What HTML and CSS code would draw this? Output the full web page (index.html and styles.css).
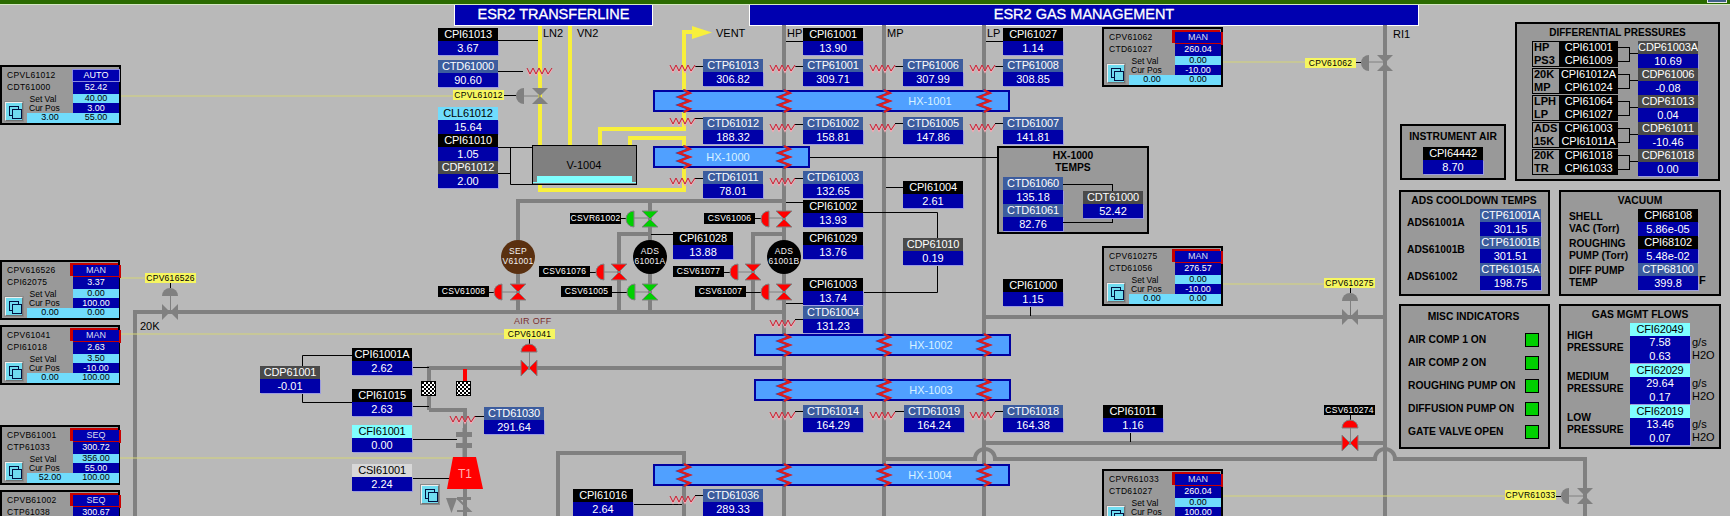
FILE: index.html
```html
<!DOCTYPE html>
<html lang="en">
<head>
<meta charset="utf-8">
<title>ESR2 Cryogenics</title>
<link rel="stylesheet" href="styles.css">
</head>
<body>
<div class="page">
  <div class="topbar"><span class="corner"></span></div>
  <header class="titles">
    <h1 class="title title-tl">ESR2 TRANSFERLINE</h1>
    <h1 class="title title-gm">ESR2 GAS MANAGEMENT</h1>
  </header>

  <svg class="plant" width="1730" height="516" viewBox="0 0 1730 516">
    <defs>
      <polygon id="hg" points="-8,-8 8,-8 -8,8 8,8"/>
      <polygon id="bt" points="-8,-8 8,8 8,-8 -8,8"/>
      <path id="dl" d="M0,-8A8,8 0 0 0 0,8Z"/>
      <path id="dt" d="M-8,0A8,8 0 0 1 8,0Z"/>
      <g id="sq" fill="none">
        <polyline class="sq-s" points="0,-2 3,4 6,-2 9,4 12,-2 15,4 18,-2 21,4 25,-2"/>
        <polyline class="sq-l" points="0,-3 3,3 6,-3 9,3 12,-3 15,3 18,-3 21,3 25,-3"/>
      </g>
      <g id="coil" fill="none">
        <polyline class="coil-b" points="-1,0 5,3 -6,7 5,11 -6,15 5,19 -1,22"/>
        <polyline class="coil-r" points="0,0 6,3 -5,7 6,11 -5,15 6,19 0,22"/>
      </g>
      <pattern id="chk" width="4" height="4" patternUnits="userSpaceOnUse">
        <rect width="4" height="4" fill="#fff"/>
        <rect width="2" height="2" fill="#000"/>
        <rect x="2" y="2" width="2" height="2" fill="#000"/>
      </pattern>
    </defs>

    <path class="pipe" d="M784 25V516M884 25V516M984 25V516M1385 25V516"/>
    <path class="pipe" d="M518 312V201H784M650 201V312M619 312V234H650M753 312V234H784"/>
    <path class="pipe" d="M135 516V312H784M429 410V368H784M429 410H465V457M465 489V516"/>
    <path class="pipe" d="M986 317H1385M986 443H1385M884 459H975A10 10 0 0 1 995 459H1375A10 10 0 0 1 1395 459H1585V516M558 516V453H684V516"/>
    <path class="pipe-hot" d="M465 369V381"/>

    <path class="ln" d="M540 26V145M570 26V145M600 145V129H684V32H694M630 145V138H684V190H540V185"/>
    <polygon class="fill-y" points="692,26 712,32.5 692,39"/>

    <path class="ctl-line" d="M121 96H453M120 278H145M120 334H504M120 458H453M1223 62H1305M1223 284H1324M1223 496H1505"/>

    <path class="wire" d="M498 40.5H538M498 71.5H523M498 147.5H532M498 173.5H510.5M510.5 147V184.5H532"/>
    <path class="wire" d="M786 41.5H803M986 41.5H1003M786 202.5H803M786 303.5H803M886 187.5H903M651 234.5H673"/>
    <path class="wire" d="M695 66.5H703M795 66.5H803M895 66.5H903M995 66.5H1003M695 118.5H703M795 124.5H803M895 123.5H903M995 123.5H1003M695 178.5H703M795 178.5H803M795 319.5H803M795 411.5H803M475 416.5H484M695 495.5H703M895 411.5H904M995 411.5H1003"/>
    <path class="wire" d="M810 157.5H997M863 212.5H937.5V238M937.5 265V292.5H863M633 504.5H682"/>
    <path class="wire" d="M302.5 366V355.5H352M302.5 393V402.5H352M412 367.5H429M412 406.5H429M412 439.5H457M412 478.5H449M1030.5 306V316M1130.5 432V442"/>
    <path class="wire" d="M503 95.5H516M621 218.5H626M755 218.5H761M590 272.5H596M724 272.5H730M489 292.5H494M612 292.5H627M746 292.5H761M1356 62.5H1361M1556 496.5H1561M170.5 283V288M529.5 339V344M1350.5 288V293M1350.5 415V420"/>

    <rect class="vessel" x="532.5" y="145.5" width="104" height="39"/>
    <rect class="liquid" x="537" y="176" width="95" height="6"/>
    <rect class="liquid" x="533" y="182" width="103" height="1"/>
    <text class="lbl" x="584" y="169" text-anchor="middle">V-1004</text>

    <g class="hx">
      <rect x="654" y="91" width="355" height="20"/>
      <rect x="654" y="147" width="155" height="20"/>
      <rect x="755" y="335" width="255" height="20"/>
      <rect x="755" y="380" width="255" height="20"/>
      <rect x="654" y="465" width="355" height="20"/>
      <text x="930" y="105" text-anchor="middle">HX-1001</text>
      <text x="728" y="161" text-anchor="middle">HX-1000</text>
      <text x="931" y="349" text-anchor="middle">HX-1002</text>
      <text x="931" y="394" text-anchor="middle">HX-1003</text>
      <text x="930" y="479" text-anchor="middle">HX-1004</text>
    </g>

    <use href="#coil" x="684" y="90"/><use href="#coil" x="784" y="90"/><use href="#coil" x="884" y="90"/><use href="#coil" x="984" y="90"/>
    <use href="#coil" x="684" y="146"/><use href="#coil" x="784" y="146"/>
    <use href="#coil" x="784" y="334"/><use href="#coil" x="884" y="334"/><use href="#coil" x="984" y="334"/>
    <use href="#coil" x="784" y="379"/><use href="#coil" x="884" y="379"/><use href="#coil" x="984" y="379"/>
    <use href="#coil" x="684" y="464"/><use href="#coil" x="784" y="464"/><use href="#coil" x="884" y="464"/><use href="#coil" x="984" y="464"/>

    <use href="#sq" x="527" y="71"/>
    <use href="#sq" x="670" y="68"/><use href="#sq" x="770" y="68"/><use href="#sq" x="870" y="68"/><use href="#sq" x="970" y="68"/>
    <use href="#sq" x="670" y="121"/><use href="#sq" x="770" y="127"/><use href="#sq" x="870" y="127"/><use href="#sq" x="970" y="127"/>
    <use href="#sq" x="670" y="181"/><use href="#sq" x="770" y="181"/>
    <use href="#sq" x="770" y="323"/><use href="#sq" x="770" y="415"/><use href="#sq" x="870" y="415"/><use href="#sq" x="970" y="415"/>
    <use href="#sq" x="450" y="419"/><use href="#sq" x="670" y="499"/>

    <path class="stem" d="M524 96H540M634 218H650M769 218H784M604 272H619M738 272H753M502 292H518M635 292H650M769 292H784M1369 62H1385M1569 496H1585M170.5 296V312M529.5 352V368M1350.5 301V317M1350.5 428V443"/>

    <g class="v-grey">
      <use href="#hg" x="540" y="96"/><use href="#dl" x="524" y="96"/>
      <use href="#hg" x="1385" y="63"/><use href="#dl" x="1369" y="63"/>
      <use href="#hg" x="1585" y="496"/><use href="#dl" x="1569" y="496"/>
      <use href="#bt" x="170" y="312"/><use href="#dt" x="170" y="296"/>
      <use href="#bt" x="1350" y="317"/><use href="#dt" x="1350" y="301"/>
    </g>
    <g class="v-green">
      <use href="#hg" x="650" y="219"/><use href="#dl" x="634" y="219"/>
      <use href="#hg" x="650" y="292"/><use href="#dl" x="635" y="292"/>
    </g>
    <g class="v-red">
      <use href="#hg" x="784" y="219"/><use href="#dl" x="769" y="219"/>
      <use href="#hg" x="619" y="272"/><use href="#dl" x="604" y="272"/>
      <use href="#hg" x="753" y="272"/><use href="#dl" x="738" y="272"/>
      <use href="#hg" x="518" y="292"/><use href="#dl" x="502" y="292"/>
      <use href="#hg" x="784" y="292"/><use href="#dl" x="769" y="292"/>
      <use href="#bt" x="529" y="368"/><use href="#dt" x="529" y="352"/>
      <use href="#bt" x="1350" y="443"/><use href="#dt" x="1350" y="428"/>
    </g>

    <circle class="sep" cx="518" cy="257" r="17"/>
    <circle class="ads" cx="650" cy="257" r="17"/>
    <circle class="ads" cx="784" cy="257" r="17"/>
    <text class="vessel-t" x="518" y="254" text-anchor="middle">SEP</text>
    <text class="vessel-t" x="518" y="264" text-anchor="middle">V61001</text>
    <text class="vessel-t" x="650" y="254" text-anchor="middle">ADS</text>
    <text class="vessel-t" x="650" y="264" text-anchor="middle">61001A</text>
    <text class="vessel-t" x="784" y="254" text-anchor="middle">ADS</text>
    <text class="vessel-t" x="784" y="264" text-anchor="middle">61001B</text>

    <rect class="chk" x="421.5" y="381.5" width="14" height="14"/>
    <rect class="chk" x="456.5" y="381.5" width="14" height="14"/>

    <rect class="fill-g" x="456" y="432" width="16" height="5"/>
    <rect class="fill-g" x="456" y="443" width="16" height="5"/>
    <path class="pipe-thin" d="M464.5 428V457"/>
    <polygon class="fill-r" points="453,457 476,457 483,489 447,489"/>
    <text class="t1" x="465" y="478" text-anchor="middle">T1</text>
    <rect class="fill-g" x="457" y="497" width="14" height="3"/>
    <polygon class="fill-g" points="446,498 457,498 451.5,513"/>
    <path class="pipe-diag" d="M458 499L470 511H457"/>

    <text class="lbl" x="543" y="37">LN2</text>
    <text class="lbl" x="577" y="37">VN2</text>
    <text class="lbl" x="716" y="37">VENT</text>
    <text class="lbl" x="787" y="37">HP</text>
    <text class="lbl" x="887" y="37">MP</text>
    <text class="lbl" x="987" y="37">LP</text>
    <text class="lbl" x="1393" y="38">RI1</text>
    <text class="lbl" x="140" y="330">20K</text>
    <text class="airoff" x="514" y="324">AIR OFF</text>
  </svg>

  <div class="tag node at-cpi61013"><b class="k">CPI61013</b><span>3.67</span></div>
  <div class="tag node at-ctd61000"><b class="s">CTD61000</b><span>90.60</span></div>
  <div class="tag node at-cll61012"><b class="c">CLL61012</b><span>15.64</span></div>
  <div class="tag node at-cpi61010"><b class="k">CPI61010</b><span>1.05</span></div>
  <div class="tag node at-cdp61012"><b class="d">CDP61012</b><span>2.00</span></div>
  <div class="tag node at-cpi61001"><b class="k">CPI61001</b><span>13.90</span></div>
  <div class="tag node at-ctp61013"><b class="s">CTP61013</b><span>306.82</span></div>
  <div class="tag node at-ctp61001"><b class="s">CTP61001</b><span>309.71</span></div>
  <div class="tag node at-ctd61012"><b class="s">CTD61012</b><span>188.32</span></div>
  <div class="tag node at-ctd61002"><b class="s">CTD61002</b><span>158.81</span></div>
  <div class="tag node at-ctd61011"><b class="s">CTD61011</b><span>78.01</span></div>
  <div class="tag node at-ctd61003"><b class="s">CTD61003</b><span>132.65</span></div>
  <div class="tag node at-cpi61002"><b class="k">CPI61002</b><span>13.93</span></div>
  <div class="tag node at-cpi61028"><b class="k">CPI61028</b><span>13.88</span></div>
  <div class="tag node at-cpi61029"><b class="k">CPI61029</b><span>13.76</span></div>
  <div class="tag node at-cpi61003"><b class="k">CPI61003</b><span>13.74</span></div>
  <div class="tag node at-ctd61004"><b class="s">CTD61004</b><span>131.23</span></div>
  <div class="tag node at-ctd61014"><b class="s">CTD61014</b><span>164.29</span></div>
  <div class="tag node at-ctd61036"><b class="s">CTD61036</b><span>289.33</span></div>
  <div class="tag node at-cpi61016"><b class="k">CPI61016</b><span>2.64</span></div>
  <div class="tag node at-ctd61030"><b class="s">CTD61030</b><span>291.64</span></div>
  <div class="tag node at-cdp61001"><b class="d">CDP61001</b><span>-0.01</span></div>
  <div class="tag node at-cpi61001a"><b class="k">CPI61001A</b><span>2.62</span></div>
  <div class="tag node at-cpi61015"><b class="k">CPI61015</b><span>2.63</span></div>
  <div class="tag node at-cfi61001"><b class="a">CFI61001</b><span>0.00</span></div>
  <div class="tag node at-csi61001"><b class="g">CSI61001</b><span>2.24</span></div>
  <div class="tag node at-cpi61027"><b class="k">CPI61027</b><span>1.14</span></div>
  <div class="tag node at-ctp61006"><b class="s">CTP61006</b><span>307.99</span></div>
  <div class="tag node at-ctp61008"><b class="s">CTP61008</b><span>308.85</span></div>
  <div class="tag node at-ctd61005"><b class="s">CTD61005</b><span>147.86</span></div>
  <div class="tag node at-ctd61007"><b class="s">CTD61007</b><span>141.81</span></div>
  <div class="tag node at-cpi61004"><b class="k">CPI61004</b><span>2.61</span></div>
  <div class="tag node at-cdp61010"><b class="d">CDP61010</b><span>0.19</span></div>
  <div class="tag node at-cpi61000"><b class="k">CPI61000</b><span>1.15</span></div>
  <div class="tag node at-cpi61011"><b class="k">CPI61011</b><span>1.16</span></div>
  <div class="tag node at-ctd61019"><b class="s">CTD61019</b><span>164.24</span></div>
  <div class="tag node at-ctd61018"><b class="s">CTD61018</b><span>164.38</span></div>

  <div class="pill yel at-y-cpvl61012">CPVL61012</div>
  <div class="pill yel at-y-cpv616526">CPV616526</div>
  <div class="pill yel at-y-cpv61041">CPV61041</div>
  <div class="pill yel at-y-cpv61062">CPV61062</div>
  <div class="pill yel at-y-cpv610275">CPV610275</div>
  <div class="pill yel at-y-cpvr61033">CPVR61033</div>
  <div class="pill blk at-k-csvr61002">CSVR61002</div>
  <div class="pill blk at-k-csv61006">CSV61006</div>
  <div class="pill blk at-k-csv61076">CSV61076</div>
  <div class="pill blk at-k-csv61077">CSV61077</div>
  <div class="pill blk at-k-csv61008">CSV61008</div>
  <div class="pill blk at-k-csv61005">CSV61005</div>
  <div class="pill blk at-k-csv61007">CSV61007</div>
  <div class="pill blk at-k-csv610274">CSV610274</div>

  <button class="btn at-btn-t1" type="button" aria-label="Open"></button>

  <section class="ctl at-cpvl61012">
    <div class="c-name">CPVL61012</div><div class="c-mode">AUTO</div>
    <div class="c-name">CDT61000</div><div class="c-val">52.42</div>
    <button class="btn c-btn" type="button" aria-label="Open"></button>
    <div class="c-lab c-lab-set">Set Val</div><div class="c-cy">40.00</div>
    <div class="c-lab">Cur Pos</div><div class="c-val">3.00</div>
    <div class="c-cy c-lo">3.00</div><div class="c-cy">55.00</div>
  </section>
  <section class="ctl at-cpv616526">
    <div class="c-name">CPV616526</div><div class="c-mode alarm">MAN</div>
    <div class="c-name">CPI62075</div><div class="c-val">3.37</div>
    <button class="btn c-btn" type="button" aria-label="Open"></button>
    <div class="c-lab c-lab-set">Set Val</div><div class="c-cy">0.00</div>
    <div class="c-lab">Cur Pos</div><div class="c-val">100.00</div>
    <div class="c-cy c-lo">0.00</div><div class="c-cy">0.00</div>
  </section>
  <section class="ctl at-cpv61041">
    <div class="c-name">CPV61041</div><div class="c-mode alarm">MAN</div>
    <div class="c-name">CPI61018</div><div class="c-val">2.63</div>
    <button class="btn c-btn" type="button" aria-label="Open"></button>
    <div class="c-lab c-lab-set">Set Val</div><div class="c-cy">3.50</div>
    <div class="c-lab">Cur Pos</div><div class="c-val">-10.00</div>
    <div class="c-cy c-lo">0.00</div><div class="c-cy">100.00</div>
  </section>
  <section class="ctl at-cpvb61001">
    <div class="c-name">CPVB61001</div><div class="c-mode alarm">SEQ</div>
    <div class="c-name">CTP61033</div><div class="c-val">300.72</div>
    <button class="btn c-btn" type="button" aria-label="Open"></button>
    <div class="c-lab c-lab-set">Set Val</div><div class="c-cy">356.00</div>
    <div class="c-lab">Cur Pos</div><div class="c-val">55.00</div>
    <div class="c-cy c-lo">52.00</div><div class="c-cy">100.00</div>
  </section>
  <section class="ctl at-cpvb61002">
    <div class="c-name">CPVB61002</div><div class="c-mode alarm">SEQ</div>
    <div class="c-name">CTP61038</div><div class="c-val">300.67</div>
  </section>
  <section class="ctl at-cpv61062">
    <div class="c-name">CPV61062</div><div class="c-mode alarm">MAN</div>
    <div class="c-name">CTD61027</div><div class="c-val">260.04</div>
    <button class="btn c-btn" type="button" aria-label="Open"></button>
    <div class="c-lab c-lab-set">Set Val</div><div class="c-cy">0.00</div>
    <div class="c-lab">Cur Pos</div><div class="c-val">-10.00</div>
    <div class="c-cy c-lo">0.00</div><div class="c-cy">0.00</div>
  </section>
  <section class="ctl at-cpv610275">
    <div class="c-name">CPV610275</div><div class="c-mode alarm">MAN</div>
    <div class="c-name">CTD61056</div><div class="c-val">276.57</div>
    <button class="btn c-btn" type="button" aria-label="Open"></button>
    <div class="c-lab c-lab-set">Set Val</div><div class="c-cy">0.00</div>
    <div class="c-lab">Cur Pos</div><div class="c-val">-10.00</div>
    <div class="c-cy c-lo">0.00</div><div class="c-cy">0.00</div>
  </section>
  <section class="ctl at-cpvr61033">
    <div class="c-name">CPVR61033</div><div class="c-mode alarm">MAN</div>
    <div class="c-name">CTD61027</div><div class="c-val">260.04</div>
    <button class="btn c-btn" type="button" aria-label="Open"></button>
    <div class="c-lab c-lab-set">Set Val</div><div class="c-cy">0.00</div>
    <div class="c-lab">Cur Pos</div><div class="c-val">100.00</div>
  </section>

  <section class="panel p-hx">
    <h2 class="p-title">HX-1000<br>TEMPS</h2>
    <div class="hx-body">
      <span class="hx-wire"></span>
      <div class="hx-col">
        <div class="tag"><b class="s">CTD61060</b><span>135.18</span></div>
        <div class="tag"><b class="s">CTD61061</b><span>82.76</span></div>
      </div>
      <div class="tag"><b class="d">CDT61000</b><span>52.42</span></div>
    </div>
  </section>

  <section class="panel p-air">
    <h2 class="p-title">INSTRUMENT AIR</h2>
    <div class="tag"><b class="k">CPI64442</b><span>8.70</span></div>
  </section>

  <section class="panel p-dp">
    <h2 class="p-title">DIFFERENTIAL PRESSURES</h2>
    <div class="dp-row">
      <div class="pair"><b>HP</b><span>CPI61001</span><b>PS3</b><span>CPI61009</span></div><i class="brk"></i>
      <div class="tag"><b class="d">CDP61003A</b><span>10.69</span></div>
    </div>
    <div class="dp-row">
      <div class="pair"><b>20K</b><span>CPI61012A</span><b>MP</b><span>CPI61024</span></div><i class="brk"></i>
      <div class="tag"><b class="d">CDP61006</b><span>-0.08</span></div>
    </div>
    <div class="dp-row">
      <div class="pair"><b>LPH</b><span>CPI61064</span><b>LP</b><span>CPI61027</span></div><i class="brk"></i>
      <div class="tag"><b class="d">CDP61013</b><span>0.04</span></div>
    </div>
    <div class="dp-row">
      <div class="pair"><b>ADS</b><span>CPI61003</span><b>15K</b><span>CPI61011A</span></div><i class="brk"></i>
      <div class="tag"><b class="d">CDP61011</b><span>-10.46</span></div>
    </div>
    <div class="dp-row">
      <div class="pair"><b>20K</b><span>CPI61018</span><b>TR</b><span>CPI61033</span></div><i class="brk"></i>
      <div class="tag"><b class="d">CDP61018</b><span>0.00</span></div>
    </div>
  </section>

  <section class="panel p-ads">
    <h2 class="p-title">ADS COOLDOWN TEMPS</h2>
    <div class="ads-row"><strong>ADS61001A</strong><div class="tag wide"><b class="s">CTP61001A</b><span>301.15</span></div></div>
    <div class="ads-row"><strong>ADS61001B</strong><div class="tag wide"><b class="s">CTP61001B</b><span>301.51</span></div></div>
    <div class="ads-row"><strong>ADS61002</strong><div class="tag wide"><b class="s">CTP61015A</b><span>198.75</span></div></div>
  </section>

  <section class="panel p-vac">
    <h2 class="p-title">VACUUM</h2>
    <div class="vac-row"><strong>SHELL<br>VAC (Torr)</strong><div class="tag"><b class="k">CPI68108</b><span>5.86e-05</span></div></div>
    <div class="vac-row"><strong>ROUGHING<br>PUMP (Torr)</strong><div class="tag"><b class="k">CPI68102</b><span>5.48e-02</span></div></div>
    <div class="vac-row"><strong>DIFF PUMP<br>TEMP</strong><div class="tag"><b class="s">CTP68100</b><span>399.8</span></div><em class="unit-f">F</em></div>
  </section>

  <section class="panel p-misc">
    <h2 class="p-title">MISC INDICATORS</h2>
    <div class="misc-row"><strong>AIR COMP 1 ON</strong><i class="led"></i></div>
    <div class="misc-row"><strong>AIR COMP 2 ON</strong><i class="led"></i></div>
    <div class="misc-row"><strong>ROUGHING PUMP ON</strong><i class="led"></i></div>
    <div class="misc-row"><strong>DIFFUSION PUMP ON</strong><i class="led"></i></div>
    <div class="misc-row"><strong>GATE VALVE OPEN</strong><i class="led"></i></div>
  </section>

  <section class="panel p-gas">
    <h2 class="p-title">GAS MGMT FLOWS</h2>
    <div class="gas-row"><strong>HIGH<br>PRESSURE</strong><div class="tag triple"><b class="a">CFI62049</b><span>7.58</span><span>0.63</span></div><div class="units">g/s<br>H2O</div></div>
    <div class="gas-row"><strong>MEDIUM<br>PRESSURE</strong><div class="tag triple"><b class="a">CFI62029</b><span>29.64</span><span>0.17</span></div><div class="units">g/s<br>H2O</div></div>
    <div class="gas-row"><strong>LOW<br>PRESSURE</strong><div class="tag triple"><b class="a">CFI62019</b><span>13.46</span><span>0.07</span></div><div class="units">g/s<br>H2O</div></div>
  </section>
</div>
</body>
</html>
```

FILE: styles.css
```css
* { box-sizing: border-box; }
html, body { margin: 0; padding: 0; background: #b9b9b9; }
body { font-family: "Liberation Sans", Arial, sans-serif; color: #000; }

.page { position: relative; width: 1730px; height: 516px; overflow: hidden; background: #b9b9b9; }

/* header */
.topbar { position: relative; height: 5px; background: #2a6a00; border-bottom: 1px solid #d4e8c4; }
.corner { position: absolute; right: 3px; top: 0; width: 20px; height: 3px; background: #40608a; border: 1px solid #e8e8e8; border-top: 0; }
.titles { display: flex; gap: 96px; padding-left: 454px; }
.title { margin: 0; height: 21px; background: #0000b0; color: #fff; border: 1px solid #fff; border-top: 0; font-size: 14.5px; font-weight: 400; line-height: 19px; text-align: center; -webkit-text-stroke: .3px #fff; }
.title-tl { width: 199px; }
.title-gm { width: 670px; }

/* plant drawing */
.plant { position: absolute; left: 0; top: 0; }
.pipe { fill: none; stroke: #808080; stroke-width: 4; }
.pipe-hot { fill: none; stroke: #ff0000; stroke-width: 4; }
.pipe-thin { fill: none; stroke: #808080; stroke-width: 4; }
.pipe-diag { fill: none; stroke: #808080; stroke-width: 2; }
.ln { fill: none; stroke: #f8f03c; stroke-width: 4; }
.ctl-line { fill: none; stroke: #d6d678; stroke-width: 1.2; }
.wire { fill: none; stroke: #000; stroke-width: 1; }
.stem { fill: none; stroke: #808080; stroke-width: 1; }
.fill-y { fill: #f8f03c; }
.fill-g { fill: #808080; }
.fill-r { fill: #ff0000; }
.vessel { fill: #808080; stroke: #000; stroke-width: 1; }
.liquid { fill: #80ffff; }
.lbl { font-size: 11px; fill: #000; }
.airoff { font-size: 9px; letter-spacing: .3px; fill: #7a3030; }
.t1 { font-size: 12px; fill: #ffb0b0; }
.hx rect { fill: #50a0ff; stroke: #0000a0; stroke-width: 2; }
.hx text { font-size: 11px; fill: #d8f2ff; }
.sq-s { stroke: #f4a8b4; stroke-width: 1.5; }
.sq-l { stroke: #c02030; stroke-width: 1; }
.coil-b { stroke: #1c4cb0; stroke-width: 2; }
.coil-r { stroke: #e01c1c; stroke-width: 2; }
.v-grey { fill: #808080; }
.v-green { fill: #00d000; stroke: #808080; stroke-width: 1; }
.v-red { fill: #ff0000; stroke: #808080; stroke-width: 1; }
.sep { fill: #5a3010; }
.ads { fill: #000; }
.vessel-t { font-size: 8.5px; fill: #f2f2f2; letter-spacing: .3px; }
.chk { fill: url(#chk); stroke: #000; stroke-width: 1; }

/* value tag */
.tag { display: flex; flex-direction: column; width: 60px; height: 27px; font-size: 11px; line-height: 13px; text-align: center; color: #fff; }
.tag b { display: block; height: 13px; font-weight: 400; white-space: nowrap; letter-spacing: -.15px; overflow: hidden; }
.tag span { display: block; height: 14px; background: #0000a8; box-shadow: 1px 1px 0 #9c9ce0; line-height: 14px; }
.tag .k { background: #000; }
.tag .s { background: #3c5c9e; }
.tag .d { background: #4a4a4a; }
.tag .c { background: #70dcfc; color: #000; }
.tag .a { background: #80ffff; color: #000; }
.tag .g { background: #d8d8d8; color: #000; }
.tag.triple { height: 40px; }
.tag.triple span { height: 13.5px; line-height: 13px; }
.tag.wide { width: 61px; }
.node { position: absolute; }

.at-cpi61013 { left: 438px; top: 28px; }
.at-ctd61000 { left: 438px; top: 60px; }
.at-cll61012 { left: 438px; top: 107px; }
.at-cpi61010 { left: 438px; top: 134px; }
.at-cdp61012 { left: 438px; top: 161px; }
.at-cpi61001 { left: 803px; top: 28px; }
.at-ctp61013 { left: 703px; top: 59px; }
.at-ctp61001 { left: 803px; top: 59px; }
.at-ctd61012 { left: 703px; top: 117px; }
.at-ctd61002 { left: 803px; top: 117px; }
.at-ctd61011 { left: 703px; top: 171px; }
.at-ctd61003 { left: 803px; top: 171px; }
.at-cpi61002 { left: 803px; top: 200px; }
.at-cpi61028 { left: 673px; top: 232px; }
.at-cpi61029 { left: 803px; top: 232px; }
.at-cpi61003 { left: 803px; top: 278px; }
.at-ctd61004 { left: 803px; top: 306px; }
.at-ctd61014 { left: 803px; top: 405px; }
.at-ctd61036 { left: 703px; top: 489px; }
.at-cpi61016 { left: 573px; top: 489px; }
.at-ctd61030 { left: 484px; top: 407px; }
.at-cdp61001 { left: 260px; top: 366px; }
.at-cpi61001a { left: 352px; top: 348px; }
.at-cpi61015 { left: 352px; top: 389px; }
.at-cfi61001 { left: 352px; top: 425px; }
.at-csi61001 { left: 352px; top: 464px; }
.at-cpi61027 { left: 1003px; top: 28px; }
.at-ctp61006 { left: 903px; top: 59px; }
.at-ctp61008 { left: 1003px; top: 59px; }
.at-ctd61005 { left: 903px; top: 117px; }
.at-ctd61007 { left: 1003px; top: 117px; }
.at-cpi61004 { left: 903px; top: 181px; }
.at-cdp61010 { left: 903px; top: 238px; }
.at-cpi61000 { left: 1003px; top: 279px; }
.at-cpi61011 { left: 1103px; top: 405px; }
.at-ctd61019 { left: 904px; top: 405px; }
.at-ctd61018 { left: 1003px; top: 405px; }

/* small name plates */
.pill { position: absolute; width: 51px; height: 10px; font-size: 8.5px; letter-spacing: .3px; line-height: 10px; text-align: center; white-space: nowrap; }
.yel { background: #f6f660; color: #000; }
.blk { background: #000; color: #fff; }
.at-y-cpvl61012 { left: 453px; top: 90px; }
.at-y-cpv616526 { left: 145px; top: 273px; }
.at-y-cpv61041 { left: 504px; top: 329px; }
.at-y-cpv61062 { left: 1305px; top: 58px; }
.at-y-cpv610275 { left: 1324px; top: 278px; }
.at-y-cpvr61033 { left: 1505px; top: 490px; }
.at-k-csvr61002 { left: 570px; top: 213px; height: 11px; }
.at-k-csv61006 { left: 704px; top: 213px; height: 11px; }
.at-k-csv61076 { left: 539px; top: 266px; height: 11px; }
.at-k-csv61077 { left: 673px; top: 266px; height: 11px; }
.at-k-csv61008 { left: 438px; top: 286px; height: 11px; }
.at-k-csv61005 { left: 561px; top: 286px; height: 11px; }
.at-k-csv61007 { left: 695px; top: 286px; height: 11px; }
.at-k-csv610274 { left: 1324px; top: 405px; }

/* window button */
.btn { position: relative; display: block; width: 20px; height: 21px; padding: 0; background: #70dcf0; border: 2px solid; border-color: #f0f0f0 #707070 #707070 #f0f0f0; outline: 1px solid #8a8a8a; outline-offset: -1px; }
.btn::before { content: ""; position: absolute; left: 3px; top: 3px; width: 8px; height: 8px; border: 1px solid #001040; }
.btn::after { content: ""; position: absolute; left: 6px; top: 6px; width: 8px; height: 8px; border: 1px solid #001040; background: #70dcf0; }
.at-btn-t1 { position: absolute; left: 420px; top: 484px; }

/* controller faceplate */
.ctl { position: absolute; width: 120px; height: 60px; padding: 3px 1px 0 1px; background: #999; border: 2px solid #000; display: grid; grid-template-columns: 24px 46px 46px; grid-template-rows: 12px 11.5px 9px 10.5px 10px; font-size: 8.5px; align-content: start; color: #000; }
.c-name { grid-column: 1 / 3; padding-left: 4px; line-height: 11px; letter-spacing: .3px; white-space: nowrap; }
.c-mode, .c-val, .c-cy { grid-column: 3; text-align: center; color: #fff; white-space: nowrap; font-size: 9px; }
.c-mode { height: 11px; line-height: 11px; background: #0000b0; box-shadow: 0 0 0 1px #8a8ae0; }
.c-mode.alarm { box-shadow: -2px -1px 0 1px #c80000, 1px 1px 0 1px #c80000; color: #dde; }
.c-val { background: #0000a8; line-height: 11px; }
.c-cy { background: #70dcfc; color: #000; line-height: 9.5px; }
.c-cy.c-lo { grid-column: 2; }
.c-lab { grid-column: 2; padding-left: 2px; line-height: 10px; white-space: nowrap; }
.c-lab-set { padding-left: 2.5px; }
.c-btn { grid-column: 1; grid-row: 3 / 6; margin: 7px 0 0 1px; z-index: 1; }
.at-cpvl61012 { left: 0; top: 65px; width: 121px; }
.at-cpv616526 { left: 0; top: 260px; }
.at-cpv61041 { left: 0; top: 325px; }
.at-cpvb61001 { left: 0; top: 425px; }
.at-cpvb61002 { left: 0; top: 490px; }
.at-cpv61062 { left: 1102px; top: 27px; width: 121px; }
.at-cpv610275 { left: 1102px; top: 246px; width: 121px; }
.at-cpvr61033 { left: 1102px; top: 469px; width: 121px; }

/* side panels */
.panel { position: absolute; background: #999; border: 2px solid #000; }
.p-title { margin: 0; font-size: 10.3px; font-weight: 700; text-align: center; line-height: 12px; }
.panel strong { font-size: 10.3px; font-weight: 700; white-space: nowrap; line-height: 12px; }

.p-hx { left: 997px; top: 146px; width: 152px; height: 88px; padding: 2px 4px 0; }
.hx-body { position: relative; display: flex; gap: 20px; align-items: center; margin-top: 3px; }
.hx-col { display: flex; flex-direction: column; }
.hx-col .tag { height: 27px; }
.hx-wire { position: absolute; left: 60px; top: 7px; width: 50px; height: 39px; border: 1px solid #000; border-left: 0; }
.hx-body > .tag { position: relative; }

.p-air { left: 1400px; top: 124px; width: 106px; height: 56px; display: flex; flex-direction: column; align-items: center; padding-top: 5px; gap: 4px; }

.p-dp { left: 1515px; top: 22px; width: 205px; height: 159px; padding: 0 0 0 15px; }
.p-dp .p-title { height: 17px; line-height: 18px; margin-left: -15px; font-size: 10px; }
.dp-row { display: flex; height: 27px; }
.pair { display: grid; grid-template-columns: 27px 59px; grid-auto-rows: 13px; width: 86px; height: 26px; outline: 1px solid #000; outline-offset: -1px; font-size: 11px; line-height: 13px; }
.pair b { padding-left: 2px; white-space: nowrap; }
.pair span { background: #000; color: #fff; text-align: center; white-space: nowrap; letter-spacing: -.15px; }
.brk { position: relative; display: block; width: 20px; height: 26px; }
.brk::before { content: ""; position: absolute; left: 0; top: 6px; width: 11px; height: 13px; border: 1px solid #000; border-left: 0; }
.brk::after { content: ""; position: absolute; left: 11px; top: 12px; width: 9px; height: 1px; background: #000; }

.p-ads { left: 1399px; top: 190px; width: 151px; height: 106px; padding: 0 7px 0 6px; }
.p-ads .p-title, .p-vac .p-title { height: 17px; line-height: 18px; }
.ads-row { display: flex; justify-content: space-between; align-items: center; height: 27px; }

.p-vac { left: 1559px; top: 190px; width: 162px; height: 106px; padding: 0 0 0 8px; }
.p-vac .p-title { margin-left: -8px; }
.vac-row { display: flex; align-items: center; height: 27px; }
.vac-row strong { width: 69px; }
.unit-f { font-style: normal; font-weight: 700; font-size: 11px; margin: 7px 0 0 1px; }

.p-misc { left: 1399px; top: 304px; width: 151px; height: 145px; padding: 0 9px 0 7px; }
.p-misc .p-title { height: 22px; line-height: 21px; }
.misc-row { display: flex; justify-content: space-between; align-items: center; height: 23px; }
.led { display: block; width: 14px; height: 14px; background: #00d000; border: 1px solid #000; }

.p-gas { left: 1559px; top: 304px; width: 162px; height: 145px; padding: 0 0 0 6px; }
.p-gas .p-title { height: 17px; line-height: 17px; margin-left: -6px; }
.gas-row { display: flex; height: 41px; }
.gas-row strong { display: block; width: 63px; padding-top: 7px; }
.units { padding: 13px 0 0 2px; font-size: 11px; line-height: 13px; }
```
